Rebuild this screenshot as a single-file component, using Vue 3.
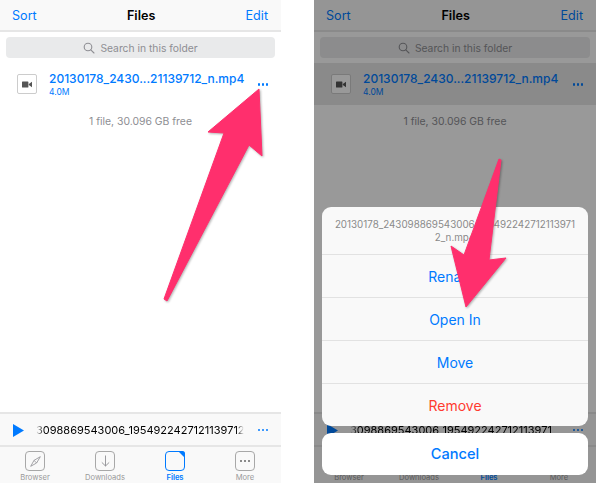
<script setup>
const phones = [
  { id: 'list', sheet: false, track: '3098869543006_1954922427121139712' },
  { id: 'menu', sheet: true, track: '3098869543006_195492242712113971' }
]

const tabs = [
  { key: 'browser', label: 'Browser' },
  { key: 'downloads', label: 'Downloads' },
  { key: 'files', label: 'Files' },
  { key: 'more', label: 'More' }
]

const actions = [
  { label: 'Rename' },
  { label: 'Open In' },
  { label: 'Move' },
  { label: 'Remove', danger: true }
]
</script>

<template>
  <div class="page">
    <div v-for="p in phones" :key="p.id" :class="['phone', { dimmed: p.sheet }]">
      <header class="nav">
        <span class="nav-btn">Sort</span>
        <span class="nav-title">Files</span>
        <span class="nav-btn">Edit</span>
      </header>

      <div class="search-wrap">
        <div class="search">
          <svg width="12" height="12" viewBox="0 0 12 12" fill="none" stroke="#8e8e93" stroke-width="1.1">
            <circle cx="5" cy="5" r="3.8" />
            <path d="M7.8 7.8 11 11" stroke-linecap="round" />
          </svg>
          <span>Search in this folder</span>
        </div>
      </div>

      <div :class="['file-row', { selected: p.sheet }]">
        <div class="file-icon">
          <svg width="10" height="7" viewBox="0 0 10 7" fill="#555">
            <rect x="0" y="0.5" width="6.4" height="6" rx="0.6" />
            <path d="M6.8 3 10 0.8v5.4L6.8 4z" />
          </svg>
        </div>
        <div class="file-info">
          <div class="file-name">20130178_2430...21139712_n.mp4</div>
          <div class="file-size">4.0M</div>
        </div>
        <div class="dots"><i></i><i></i><i></i></div>
      </div>

      <div class="free">1 file, 30.096 GB free</div>

      <div class="spacer"></div>

      <div class="player">
        <svg class="play" width="11" height="13" viewBox="0 0 11 13" fill="#007aff"><path d="M0 0 11 6.5 0 13z" /></svg>
        <div class="track"><span>{{ p.track }}</span></div>
        <div class="dots"><i></i><i></i><i></i></div>
      </div>

      <nav class="tabbar">
        <div v-for="t in tabs" :key="t.key" :class="['tab', { active: t.key === 'files' }]">
          <div class="tab-icon">
            <svg v-if="t.key === 'browser'" width="11" height="11" viewBox="0 0 11 11" fill="none" stroke="#8e8e93" stroke-width="0.8">
              <path d="M10.3 0.7 6.6 7 4 4.4z" />
              <path d="M4 4.4 0.7 10.3 6.6 7" />
            </svg>
            <svg v-else-if="t.key === 'downloads'" width="9" height="12" viewBox="0 0 9 12" fill="none" stroke="#8e8e93" stroke-width="0.9">
              <path d="M4.5 0.5v10.5M0.8 7.4 4.5 11l3.7-3.6" />
            </svg>
            <svg v-else-if="t.key === 'files'" class="corner" width="7" height="7" viewBox="0 0 7 7" fill="#007aff">
              <path d="M0 0h4.5A2.5 2.5 0 0 1 7 2.5V7z" />
            </svg>
            <div v-else class="dots gray"><i></i><i></i><i></i></div>
          </div>
          <span class="tab-label">{{ t.label }}</span>
        </div>
      </nav>

      <div v-if="p.sheet" class="overlay"></div>

      <div v-if="p.sheet" class="sheet">
        <div class="sheet-group">
          <div class="sheet-title">20130178_243098869543006_1954922427121139712_n.mp4</div>
          <div v-for="a in actions" :key="a.label" :class="['sheet-item', { danger: a.danger }]">{{ a.label }}</div>
        </div>
        <div class="sheet-cancel">Cancel</div>
      </div>
    </div>

    <!-- annotation arrows drawn over both screens -->
    <svg class="arrows" width="596" height="483" viewBox="0 0 596 483">
      <path fill="#ff2f6d" stroke="#ff2f6d" stroke-width="1" stroke-linejoin="round"
        d="M259 89 208 132 224 133 164 299 167 301 249 145 262 156z" />
      <path fill="#ff2f6d" stroke="#ff2f6d" stroke-width="1" stroke-linejoin="round"
        d="M499 159 501 160 489 260 506 258 466 307 451 246 464 255z" />
    </svg>
  </div>
</template>

<style>
html, body { margin: 0; background: #fff; }
</style>

<style scoped>
.page { width: 596px; height: 483px; display: flex; justify-content: space-between; position: relative; overflow: hidden; background: #fff; font-family: Inter, "Liberation Sans", sans-serif; }
.phone { width: 281px; height: 483px; display: flex; flex-direction: column; position: relative; overflow: hidden; background: #fff; }
.phone.dimmed { width: 282px; }

.nav { height: 30px; flex: none; display: flex; align-items: center; justify-content: space-between; padding: 0 13px 0 12px; background: #f9f9f9; border-bottom: 2px solid #e6e6e6; font-size: 12.6px; }
.nav-btn { color: #007aff; }
.nav-title { color: #000; font-weight: 600; }

.search-wrap { padding: 5px 6px 0; }
.search { height: 21px; display: flex; align-items: center; justify-content: center; gap: 5px; background: #e9eaeb; border-radius: 4px; font-size: 10.3px; color: #8e8e93; }

.file-row { display: flex; align-items: center; height: 42px; margin-top: 5px; padding: 0 13px 0 17px; }
.file-row.selected { background: #e6e6e6; }
.file-icon { width: 18px; height: 18px; flex: none; display: flex; align-items: center; justify-content: center; border: 1px solid #cccccc; border-radius: 2px; background: #fff; }
.file-info { margin-left: 12px; flex: 1; min-width: 0; }
.file-name { font-size: 12px; font-weight: 500; color: #007aff; line-height: 14px; white-space: nowrap; }
.file-size { font-size: 8.5px; color: #007aff; line-height: 10px; margin-top: 1px; }

.dots { display: flex; gap: 1.5px; flex: none; }
.dots i { width: 2.5px; height: 2.5px; border-radius: 50%; background: #007aff; }
.file-row .dots { margin-top: 1px; }
.dots.gray i { background: #666; }

.free { margin-top: 10px; text-align: center; font-size: 10.4px; line-height: 14px; color: #8e8e93; }
.spacer { flex: 1; }

.player { height: 30px; flex: none; display: flex; align-items: center; padding: 1px 13px 0; background: #f9f9f9; border-top: 2px solid #e6e6e6; border-bottom: 2px solid #e6e6e6; }
.play { flex: none; }
.track { width: 209px; margin: 0 14px 0 12px; overflow: hidden; white-space: nowrap; font-size: 11px; color: #000; -webkit-mask-image: linear-gradient(90deg, transparent, #000 8px, #000 200px, transparent); mask-image: linear-gradient(90deg, transparent, #000 8px, #000 200px, transparent); }

.tabbar { height: 36px; flex: none; display: flex; background: #f9f9f9; }
.tab { width: 70px; display: flex; flex-direction: column; align-items: center; color: #9a9a9a; }
.tab-icon { width: 18px; height: 18px; margin-top: 4px; display: flex; align-items: center; justify-content: center; position: relative; border: 1px solid #a8a8a8; border-radius: 4px; }
.tab-label { font-size: 7.6px; line-height: 10px; margin-top: 2px; }
.tab.active { color: #007aff; font-weight: 600; }
.tab.active .tab-icon { border-color: #007aff; }
.corner { position: absolute; top: -1px; right: -1px; }

.overlay { position: absolute; inset: 0; background: rgba(0, 0, 0, 0.4); }

.sheet { position: absolute; left: 8px; right: 8px; top: 207px; display: flex; flex-direction: column; gap: 7px; }
.sheet-group { background: #f9f9f9; border-radius: 9px; overflow: hidden; }
.sheet-title { height: 47px; box-sizing: border-box; padding: 11px 12px 0; text-align: center; font-size: 9.8px; line-height: 13px; color: #8a8a8a; word-break: break-all; }
.sheet-item { height: 43px; box-sizing: border-box; display: flex; align-items: center; justify-content: center; border-top: 1px solid #e2e2e2; font-size: 14px; color: #007aff; }
.sheet-item.danger { color: #ff3b30; }
.sheet-cancel { height: 42px; display: flex; align-items: center; justify-content: center; background: #fff; border-radius: 9px; font-size: 14.6px; font-weight: 500; color: #007aff; }

.arrows { position: absolute; left: 0; top: 0; filter: drop-shadow(1px 1px 1px rgba(0, 0, 0, 0.3)); pointer-events: none; }
</style>
